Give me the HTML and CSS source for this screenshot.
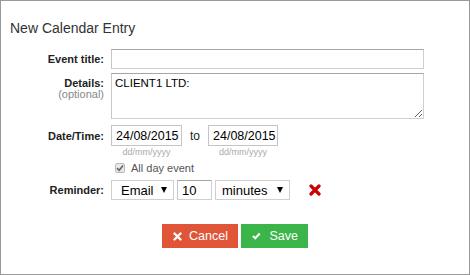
FILE: index.html
```html
<!DOCTYPE html>
<html>
<head>
  <meta charset="UTF-8">
  <title>New Calendar Entry</title>
  <link rel="stylesheet" href="styles.css">
</head>
<body>
  <div class="dialog">
    <h2 class="dialog-title">New Calendar Entry</h2>

    <form class="entry-form">
      <div class="row row-title">
        <label class="label">Event title:</label>
        <input type="text" class="text-input wide">
      </div>

      <div class="row row-details">
        <label class="label">Details:<span class="label-note">(optional)</span></label>
        <textarea class="text-area">CLIENT1 LTD:</textarea>
      </div>

      <div class="row row-date">
        <label class="label">Date/Time:</label>
        <div class="date-fields">
          <div class="date-group">
            <input type="text" class="text-input date-input" value="24/08/2015">
            <span class="date-hint">dd/mm/yyyy</span>
          </div>
          <span class="date-to">to</span>
          <div class="date-group">
            <input type="text" class="text-input date-input date-input-end" value="24/08/2015">
            <span class="date-hint">dd/mm/yyyy</span>
          </div>
        </div>
      </div>

      <div class="row row-check">
        <span class="label"></span>
        <span class="check-box">
          <svg width="8" height="8" viewBox="0 0 8 8"><path d="M1 4.2 L3.2 6.3 L7 1.5" fill="none" stroke="#666" stroke-width="1.6"/></svg>
        </span>
        <span class="check-text">All day event</span>
      </div>

      <div class="row row-reminder">
        <label class="label">Reminder:</label>
        <div class="reminder-fields">
          <span class="select-wrap select-type">
            <select class="select"><option>Email</option></select>
          </span>
          <input type="text" class="text-input amount-input" value="10">
          <span class="select-wrap select-unit">
            <select class="select"><option>minutes</option></select>
          </span>
          <span class="remove-icon">
            <svg width="12" height="12" viewBox="0 0 12 12"><path d="M2 2 L10 10 M10 2 L2 10" stroke="#cc0000" stroke-width="3.2" stroke-linecap="round"/></svg>
          </span>
        </div>
      </div>

      <div class="actions">
        <button type="button" class="btn btn-cancel">
          <svg width="9" height="9" viewBox="0 0 9 9"><path d="M1.5 1.5 L7.5 7.5 M7.5 1.5 L1.5 7.5" stroke="#fff" stroke-width="2.4" stroke-linecap="round"/></svg>
          Cancel
        </button>
        <button type="button" class="btn btn-save">
          <svg width="11" height="10" viewBox="0 0 11 10"><path d="M1.2 5 L4.2 8 L10 1.8" fill="none" stroke="#fff" stroke-width="2.8"/></svg>
          Save
        </button>
      </div>
    </form>
  </div>
</body>
</html>
```

FILE: styles.css
```css
* {
  box-sizing: border-box;
}

body {
  margin: 0;
  font-family: "Liberation Sans", Arial, sans-serif;
  color: #222;
  background: #fff;
}

.dialog {
  width: 470px;
  height: 275px;
  border: 1px solid #999;
  padding-top: 19px;
}

.dialog-title {
  margin: 0 0 13px 9px;
  font-size: 14px;
  font-weight: normal;
  line-height: 16px;
  color: #333;
}

.row {
  display: flex;
  align-items: center;
}

.label {
  width: 103px;
  margin-right: 7px;
  flex-shrink: 0;
  text-align: right;
  font-size: 11px;
  font-weight: bold;
  color: #222;
}

.label-note {
  display: block;
  font-weight: normal;
  color: #888;
}

.text-input,
.text-area {
  border: 1px solid;
  border-color: #a6a6a6 #cfcfcf #cfcfcf #c6c6c6;
  font-family: "Liberation Sans", Arial, sans-serif;
  color: #000;
  outline: none;
}

.text-input {
  height: 20px;
  padding: 0 4px;
  font-size: 13px;
}

.wide {
  width: 313px;
}

/* rows */
.row-title {
  margin-bottom: 4px;
}

.row-details {
  align-items: flex-start;
  margin-bottom: 6px;
}

.row-details .label {
  padding-top: 5px;
  line-height: 11px;
}

.text-area {
  display: block;
  width: 313px;
  height: 46px;
  padding: 3px 3px;
  font-size: 11.5px;
  margin: 0;
}

.row-date {
  align-items: flex-start;
}

.row-date .label {
  line-height: 21px;
  padding-top: 1px;
}

.date-fields {
  display: flex;
  align-items: flex-start;
}

.date-group {
  display: flex;
  flex-direction: column;
}

.date-input {
  width: 71px;
  height: 21px;
  padding: 0 0 0 4px;
  font-size: 12.5px;
  border-color: #c4c4c4;
}

.date-input-end {
  width: 70px;
}

.date-hint {
  margin-top: 1px;
  font-size: 9px;
  line-height: 11px;
  text-align: center;
  color: #aaa;
}

.date-to {
  width: 26px;
  text-align: center;
  font-size: 12px;
  line-height: 22px;
  color: #222;
}

.row-check {
  margin-top: 4px;
  height: 12px;
}

.check-box {
  display: flex;
  align-items: center;
  justify-content: center;
  width: 10px;
  height: 10px;
  margin-left: 4px;
  border: 1px solid #bbb;
  border-radius: 2px;
  background: #e8e8e8;
}

.check-text {
  margin-left: 6px;
  font-size: 11px;
  color: #555;
}

.row-reminder {
  margin-top: 6px;
}

.reminder-fields {
  display: flex;
  align-items: center;
  gap: 3px;
}

.select-wrap {
  position: relative;
  display: block;
}

.select-wrap::after {
  content: "";
  position: absolute;
  right: 7px;
  top: 7px;
  border-left: 3.5px solid transparent;
  border-right: 3.5px solid transparent;
  border-top: 6px solid #000;
}

.select {
  -webkit-appearance: none;
  appearance: none;
  display: block;
  height: 20px;
  border: 1px solid #cfcfcf;
  border-radius: 0;
  background: #fff;
  font-family: "Liberation Sans", Arial, sans-serif;
  font-size: 13px;
  color: #000;
  outline: none;
}

.select-type .select {
  width: 63px;
  padding: 0 0 0 9px;
}

.select-unit .select {
  width: 75px;
  padding: 0 0 0 6px;
}

.amount-input {
  width: 35px;
}

.remove-icon {
  display: flex;
  margin-left: 16px;
}

/* buttons */
.actions {
  display: flex;
  justify-content: center;
  gap: 3px;
  margin-top: 24px;
}

.btn {
  display: inline-flex;
  align-items: center;
  gap: 7px;
  height: 24px;
  padding: 0 10px 0 11px;
  border: none;
  border-radius: 0;
  font-family: "Liberation Sans", Arial, sans-serif;
  font-size: 12.5px;
  color: #fff;
  cursor: pointer;
}

.btn-cancel {
  width: 76px;
  background: #e05538;
}

.btn-save {
  width: 67px;
  gap: 9px;
  background: #3bb54a;
}
```
